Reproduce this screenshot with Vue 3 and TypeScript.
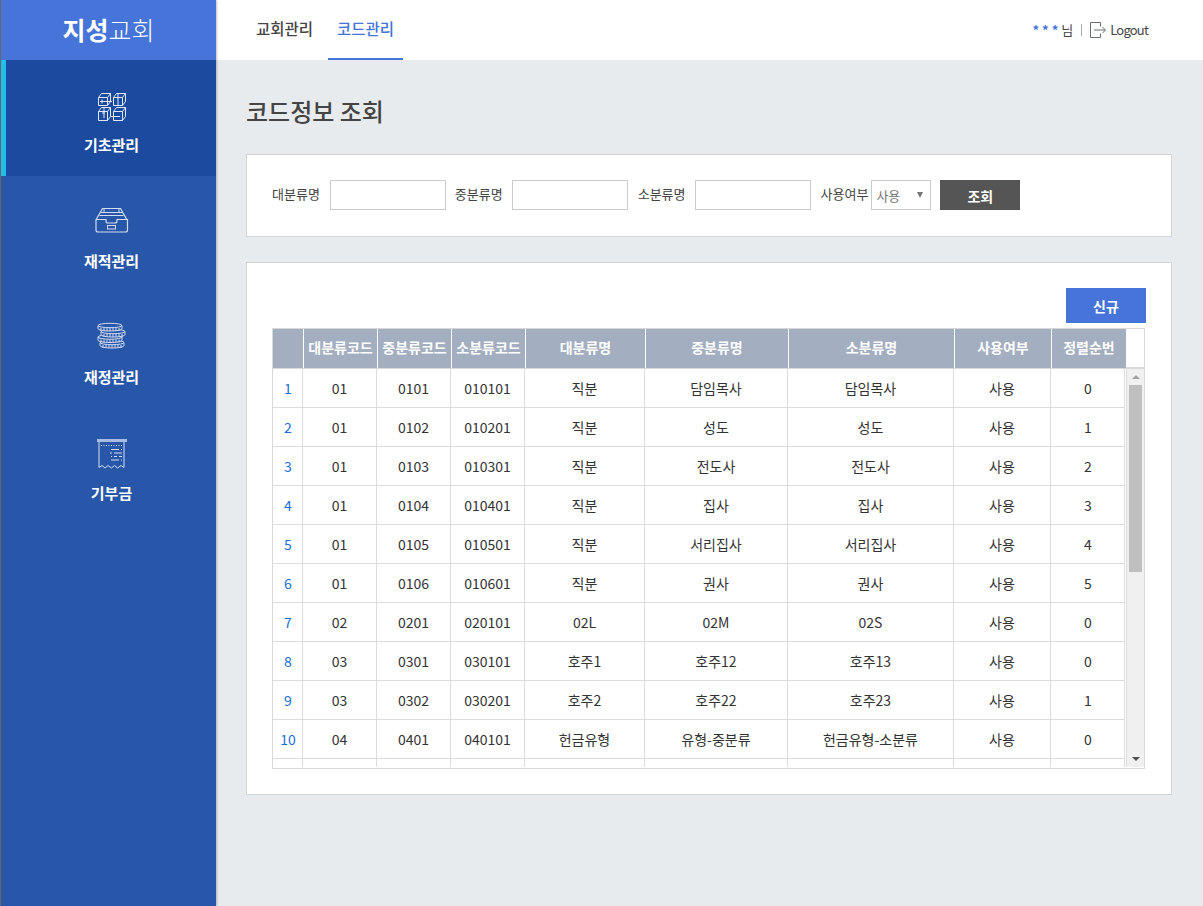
<script setup lang="ts">
interface Row { n: number; a: string; b: string; c: string; d: string; e: string; f: string; g: string; h: number }
const rows: Row[] = [
  { n: 1, a: '01', b: '0101', c: '010101', d: '직분', e: '담임목사', f: '담임목사', g: '사용', h: 0 },
  { n: 2, a: '01', b: '0102', c: '010201', d: '직분', e: '성도', f: '성도', g: '사용', h: 1 },
  { n: 3, a: '01', b: '0103', c: '010301', d: '직분', e: '전도사', f: '전도사', g: '사용', h: 2 },
  { n: 4, a: '01', b: '0104', c: '010401', d: '직분', e: '집사', f: '집사', g: '사용', h: 3 },
  { n: 5, a: '01', b: '0105', c: '010501', d: '직분', e: '서리집사', f: '서리집사', g: '사용', h: 4 },
  { n: 6, a: '01', b: '0106', c: '010601', d: '직분', e: '권사', f: '권사', g: '사용', h: 5 },
  { n: 7, a: '02', b: '0201', c: '020101', d: '02L', e: '02M', f: '02S', g: '사용', h: 0 },
  { n: 8, a: '03', b: '0301', c: '030101', d: '호주1', e: '호주12', f: '호주13', g: '사용', h: 0 },
  { n: 9, a: '03', b: '0302', c: '030201', d: '호주2', e: '호주22', f: '호주23', g: '사용', h: 1 },
  { n: 10, a: '04', b: '0401', c: '040101', d: '헌금유형', e: '유형-중분류', f: '헌금유형-소분류', g: '사용', h: 0 },
]
const heads = ['', '대분류코드', '중분류코드', '소분류코드', '대분류명', '중분류명', '소분류명', '사용여부', '정렬순번']
const menus = ['기초관리', '재적관리', '재정관리', '기부금']
const coins = [
  { x: 3, y: 21 },
  { x: 1, y: 15.5 },
  { x: 4, y: 10 },
  { x: 1, y: 4 },
]
const ticks = [3, 6, 9, 12, 15, 18, 21]
</script>

<template>
  <div class="page">
    <aside class="side">
      <div class="logo"><b>지성</b><span>교회</span></div>
      <nav>
        <a v-for="(m, i) in menus" :key="m" class="menu" :class="{ on: i === 0 }">
          <svg v-if="i === 0" width="30" height="32" viewBox="0 0 30 32" fill="none" stroke="#dfe8f8" stroke-width="1">
            <path d="M1.5 7.500h9v8h-9zM1.500 7.500l3-4h9l-3 4M10.500 15.500l3-4v-8" />
            <path d="M16.500 7.500h9v8h-9zM16.500 7.500l3-4h9l-3 4M25.500 15.500l3-4v-8" />
            <path d="M1.500 21.500h9v9h-9zM1.500 21.500l3-4h9l-3 4M10.500 30.500l3-4v-9" />
            <path d="M16.500 21.500h9v9h-9zM16.500 21.500l3-4h9l-3 4M25.500 30.500l3-4v-9" />
            <path d="M5 9.500v4M3 11.500h12M21 4v11M7 18v10M5 23h3M14 26.500h9" />
          </svg>
          <svg v-else-if="i === 1" width="34" height="32" viewBox="0 0 34 32" fill="none" stroke="#d3ddf2" stroke-width="1.200">
            <path d="M1.500 13 7.500 2.500h18l6 10.500" />
            <path d="M5.500 6.500h22M4.500 9.500h24M9 3v3M24 3v3" stroke-width="1" />
            <path d="M1 13.500h10v1.500q0 2 2 2h7q2 0 2-2v-1.500h10.500v10.500q0 2-2 2H3q-2 0-2-2z" />
            <rect x="12.500" y="19.500" width="8" height="3.500" stroke-width="1" />
          </svg>
          <svg v-else-if="i === 2" width="30" height="32" viewBox="0 0 30 32" fill="none" stroke="#d3ddf2" stroke-width="1">
            <g v-for="(c, k) in coins" :key="k" :transform="`translate(${c.x} ${c.y - 3})`">
              <path fill="#2856a8" d="M0 2.500v3c0 1.500 5 2.500 12 2.500s12-1 12-2.500v-3z" />
              <ellipse cx="12" cy="2.500" rx="12" ry="2.200" fill="#2856a8" />
              <path v-for="t in ticks" :key="t" :d="`M${t} 5v3`" />
            </g>
          </svg>
          <svg v-else width="32" height="32" viewBox="0 -1 32 32" fill="none" stroke="#d3ddf2" stroke-width="1">
            <path d="M1 1.500h30" stroke-width="3" stroke="#a9bbe0" />
            <path d="M3 3v25.500l3-2 3 2.500 3-2.500 3.500 2.500 3-2.500 3 2.500 3.500-2.500 3 2V3" />
            <path d="M5 6.500h22" stroke-dasharray="1 1.500" />
            <path d="M15 10.500h8M25 10.500h1M14 14h2M18 14h8M15 17.500h1M18 17.500h3M23 17.500h3M15 21h8M25 21h1" />
          </svg>
          <span>{{ m }}</span>
        </a>
      </nav>
    </aside>
    <div class="right">
      <header class="top">
        <a class="tab">교회관리</a>
        <a class="tab act">코드관리</a>
        <div class="user">
          <span class="stars">* * *</span><span class="nim">님</span>
          <i class="bar"></i>
          <svg width="16" height="16" viewBox="0 0 16 16" fill="none" stroke="#666d75" stroke-width="1">
            <path d="M10.500 4.500V.5H.5v15h10v-4M4 8h11M12.500 5l3 3-3 3" />
          </svg>
          <span class="out">Logout</span>
        </div>
      </header>
      <main class="main">
        <h1>코드정보 조회</h1>
        <section class="box search">
          <label>대분류명</label><input type="text" />
          <label>중분류명</label><input type="text" />
          <label>소분류명</label><input type="text" />
          <label class="use">사용여부</label>
          <div class="sel"><span>사용</span><i></i></div>
          <button class="go">조회</button>
        </section>
        <section class="box list">
          <div class="tools"><button class="new">신규</button></div>
          <div class="grid">
            <div class="thead">
              <div v-for="(h, i) in heads" :key="i" class="th">{{ h }}</div>
            </div>
            <div class="tbody">
              <div class="rows">
                <div v-for="r in rows" :key="r.n" class="tr">
                  <div class="td num">{{ r.n }}</div>
                  <div class="td">{{ r.a }}</div>
                  <div class="td">{{ r.b }}</div>
                  <div class="td">{{ r.c }}</div>
                  <div class="td">{{ r.d }}</div>
                  <div class="td">{{ r.e }}</div>
                  <div class="td">{{ r.f }}</div>
                  <div class="td">{{ r.g }}</div>
                  <div class="td">{{ r.h }}</div>
                </div>
                <div class="tr">
                  <div v-for="k in 9" :key="k" class="td"></div>
                </div>
              </div>
              <div class="scroll">
                <i class="up"></i>
                <div class="thumb"></div>
                <i class="down"></i>
              </div>
            </div>
          </div>
        </section>
      </main>
    </div>
  </div>
</template>

<style>
html, body { margin: 0; padding: 0; }
</style>

<style scoped>
.page {
  display: flex;
  width: 1203px;
  height: 906px;
  overflow: hidden;
  font-family: "Noto Sans CJK KR", "Noto Sans", sans-serif;
  color: #333;
  background: #e8ebee;
  border-left: 1px solid #666;
  box-sizing: border-box;
}
.side {
  width: 215px;
  flex: none;
  background: #2856a8;
  box-shadow: 1px 0 2px rgba(0, 0, 0, .25);
  z-index: 1;
}
.logo {
  height: 60px;
  background: #4674d8;
  color: #fff;
  display: flex;
  align-items: center;
  justify-content: center;
  line-height: 1;
  padding-bottom: 2px;
  box-sizing: border-box;
}
.logo b { font-weight: 700; font-size: 25px; }
.logo span { font-weight: 300; font-size: 25px; }
.menu {
  height: 116px;
  display: flex;
  flex-direction: column;
  align-items: center;
  justify-content: flex-start;
  color: #fff;
  font-size: 15px;
  font-weight: 700;
  line-height: 20px;
  box-sizing: border-box;
  position: relative;
  padding-left: 6px;
}
.menu svg { margin-top: 30px; height: 32px; margin-bottom: 13px; }
.menu.on { background: #1b4a9e; }
.menu.on::before {
  content: "";
  position: absolute;
  left: 0;
  top: 0;
  bottom: 0;
  width: 5px;
  background: #1fc0ee;
}
.right { flex: 1; min-width: 0; }
.top {
  height: 60px;
  background: #fff;
  display: flex;
  gap: 6px;
  padding-left: 31px;
  box-sizing: border-box;
}
.tab {
  width: 75px;
  height: 60px;
  box-sizing: border-box;
  line-height: 57px;
  text-align: center;
  font-size: 15.500px;
  font-weight: 500;
  color: #444;
  white-space: nowrap;
}
.tab.act {
  color: #4674d8;
  border-bottom: 2px solid #4674d8;
}
.user {
  margin-left: auto;
  display: flex;
  align-items: center;
  padding-right: 55px;
  padding-bottom: 1px;
  font-size: 13px;
  color: #444;
}
.stars { color: #4674d8; font-size: 13px; font-weight: 700; }
.nim { margin-left: 3px; }
.bar { width: 1px; height: 12px; background: #aaa; margin: 0 8px; }
.out { margin-left: 4px; letter-spacing: -.8px; }
.main { padding: 0 31px 0 30px; }
h1 {
  margin: 0;
  padding-top: 34px;
  height: 94px;
  box-sizing: border-box;
  font-size: 24px;
  line-height: 34px;
  font-weight: 500;
  color: #444;
}
.box {
  background: #fff;
  border: 1px solid #d3d6d9;
  box-sizing: border-box;
}
.search {
  height: 83px;
  display: flex;
  align-items: flex-start;
  padding: 25px 0 0 25px;
  margin-bottom: 25px;
}
.search label {
  font-size: 13px;
  line-height: 28px;
  color: #444;
  margin-right: 9px;
  white-space: nowrap;
}
.search label:first-child { margin-right: 10px; }
.search label.use { margin-left: 10px; margin-right: 3px; }
.search input {
  width: 116px;
  height: 30px;
  box-sizing: border-box;
  border: 1px solid #ccc;
  margin-right: 9px;
  background: #fff;
  padding: 0;
}
.search input:nth-of-type(2) { margin-right: 10px; }
.search input:nth-of-type(3) { margin-right: 0; }
.sel {
  width: 60px;
  height: 30px;
  border: 1px solid #ccc;
  box-sizing: border-box;
  display: flex;
  align-items: center;
  justify-content: space-between;
  padding: 0 7px 0 4px;
  font-size: 13px;
  color: #777;
}
.sel i {
  width: 0;
  height: 0;
  border-left: 3px solid transparent;
  border-right: 3px solid transparent;
  border-top: 6px solid #777;
}
.go {
  width: 80px;
  height: 30px;
  margin-left: 9px;
  background: #555;
  color: #fff;
  border: 0;
  padding: 2px 0 0;
  font: 700 14px "Noto Sans CJK KR", sans-serif;
}
.list {
  height: 533px;
  padding: 25px 25px 0 25px;
}
.tools { display: flex; justify-content: flex-end; height: 40px; }
.new {
  width: 80px;
  height: 35px;
  background: #4674d8;
  color: #fff;
  border: 0;
  padding: 0;
  font: 700 14px "Noto Sans CJK KR", sans-serif;
}
.grid {
  width: 873px;
  height: 441px;
  border: 1px solid #d8d8d8;
  box-sizing: border-box;
  background: #fff;
}
.thead, .tr {
  display: grid;
  grid-template-columns: 31px 74px 74px 74px 120px 143px 166px 97px 74px;
}
.thead {
  width: 853px;
  height: 39px;
}
.th {
  background: #a3aec0;
  color: #fff;
  font-size: 14px;
  font-weight: 700;
  line-height: 36px;
  text-align: center;
  border-right: 1px solid #fff;
  box-sizing: border-box;
  white-space: nowrap;
}
.th:last-child { border-right: 0; }
.tbody {
  display: flex;
  height: 400px;
  border-top: 2px solid #d8d8d8;
  margin-top: -1px;
  box-sizing: border-box;
}
.rows { width: 853px; height: 398px; overflow: hidden; flex: none; }
.tr { height: 39px; margin-left: -1px; }
.td {
  height: 39px;
  border-right: 1px solid #dcdcdc;
  border-bottom: 1px solid #dcdcdc;
  box-sizing: border-box;
  text-align: center;
  line-height: 38px;
  font-size: 14px;
  color: #333;
}
.td:last-child { padding-left: 1px; }
.num { color: #1a6fd8; padding-left: 2px; }
.scroll {
  flex: 1;
  background: #f0f0f0;
  position: relative;
  border-left: 1px solid #dcdcdc;
}
.thumb {
  position: absolute;
  left: 2px;
  width: 13px;
  top: 16px;
  height: 187px;
  background: #bfbfbf;
}
.up, .down {
  position: absolute;
  left: 5px;
  width: 0;
  height: 0;
  border-left: 4px solid transparent;
  border-right: 4px solid transparent;
}
.up { top: 6px; border-bottom: 4px solid #a3a3a3; }
.down { bottom: 6px; border-top: 4px solid #505050; }
</style>
